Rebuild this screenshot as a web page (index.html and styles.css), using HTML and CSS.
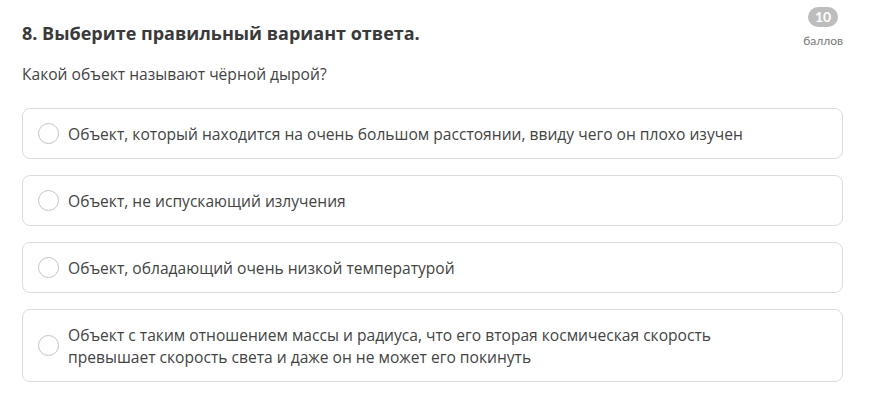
FILE: index.html
```html
<!DOCTYPE html>
<html lang="ru">
<head>
  <meta charset="UTF-8">
  <title>Вопрос 8</title>
  <link rel="stylesheet" href="styles.css">
</head>
<body>

<div class="task">
  <div class="task-head">
    <h2>8. Выберите правильный вариант ответа.</h2>
    <div class="score">
      <div class="score-num">10</div>
      <div class="score-label">баллов</div>
    </div>
  </div>

  <p class="question">Какой объект называют чёрной дырой?</p>

  <div class="answers">
    <label class="answer">
      <span class="radio"></span>
      <span class="answer-text">Объект, который находится на очень большом расстоянии, ввиду чего он плохо изучен</span>
    </label>
    <label class="answer">
      <span class="radio"></span>
      <span class="answer-text">Объект, не испускающий излучения</span>
    </label>
    <label class="answer">
      <span class="radio"></span>
      <span class="answer-text">Объект, обладающий очень низкой температурой</span>
    </label>
    <label class="answer">
      <span class="radio"></span>
      <span class="answer-text">Объект с таким отношением массы и радиуса, что его вторая космическая скорость превышает скорость света и даже он не может его покинуть</span>
    </label>
  </div>
</div>

</body>
</html>
```

FILE: styles.css
```css
body {
  font-family: 'Open Sans', sans-serif;
  background: #fff;
  color: #444;
  margin: 0;
  padding: 0;
}

.task {
  padding: 12px 50px 0 22px;
}

.task-head {
  display: flex;
  justify-content: space-between;
  align-items: flex-start;
  height: 33px;
}

.task-head h2 {
  margin: 9px 0 0;
  font-size: 18px;
  line-height: 24px;
  font-weight: 700;
  color: #3a3a3a;
}

.score {
  display: flex;
  flex-direction: column;
  align-items: center;
  margin-top: -5px;
  font-family: 'Lato', sans-serif;
}

.score-num {
  background: #bdbdbd;
  color: #fff;
  font-weight: 700;
  font-size: 14px;
  line-height: 20px;
  width: 30px;
  text-align: center;
  border-radius: 10px;
}

.score-label {
  font-size: 12px;
  color: #777;
  line-height: 16px;
  margin-top: 6px;
}

.question {
  margin: 18px 0 23px;
  font-size: 15.6px;
  line-height: 22px;
  color: #444;
}

.answers {
  display: flex;
  flex-direction: column;
  gap: 16px;
}

.answer {
  display: flex;
  align-items: center;
  gap: 9px;
  border: 1px solid #dcdcdc;
  border-radius: 8px;
  padding: 13.5px 70px 13.5px 15px;
  cursor: pointer;
}

.radio {
  flex: none;
  width: 19px;
  height: 19px;
  border: 1px solid #c4c4c4;
  border-radius: 50%;
  background: #fff;
}

.answer-text {
  font-size: 15.6px;
  line-height: 22px;
  color: #444;
}
```
